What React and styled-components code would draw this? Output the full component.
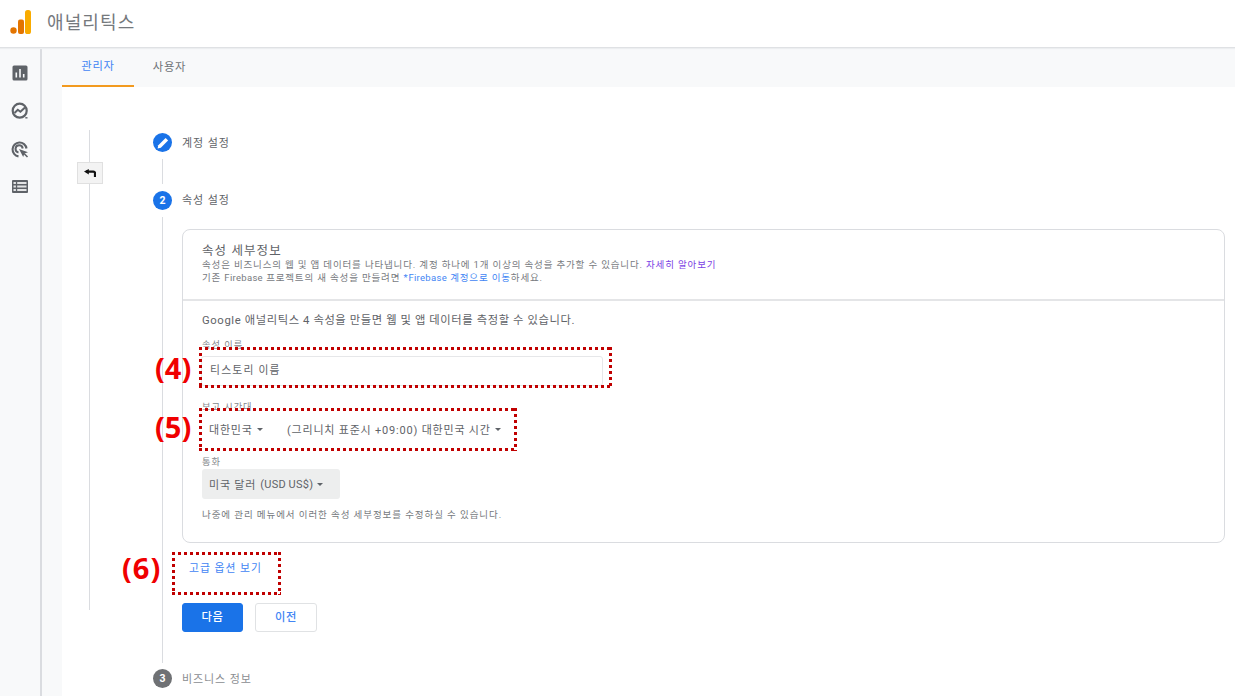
import React from "react";
import styled, { createGlobalStyle } from "styled-components";

const Global = createGlobalStyle`
  html, body { margin: 0; padding: 0; background: #fff; height: 100%; overflow: hidden; }
  body { font-family: Roboto, "Noto Sans CJK KR", sans-serif; color: #5f6368; }
  * { box-sizing: border-box; }
`;

const Page = styled.div`width: 1235px; height: 696px; overflow: hidden; display: flex; flex-direction: column;`;
const Header = styled.header`height: 48px; flex: none; background: #fff; border-bottom: 1px solid #dfe1e4; box-shadow: 0 1px 1px #eceef0; display: flex; align-items: flex-start; padding: 10px 0 0 10px; gap: 16px; position: relative; z-index: 1;`;
const Title = styled.div`font-size: 18px; line-height: 25px; color: #75797d; letter-spacing: 1.1px;`;
const Body = styled.div`flex: 1; display: flex; min-height: 0;`;
const Side = styled.nav`width: 42px; flex: none; background: #f8f9fa; border-right: 2px solid #dadce0; display: flex; flex-direction: column; align-items: center; padding-top: 17px; gap: 21px;`;
const Main = styled.main`flex: 1; background: #f8f9fa; padding-left: 20px; display: flex; flex-direction: column; min-width: 0;`;
const Tabs = styled.div`height: 39px; flex: none; display: flex;`;
const Tab = styled.div`width: ${p => p.$w}px; height: 39px; display: flex; align-items: center; justify-content: center; font-size: 11.3px; letter-spacing: 0.8px; color: ${p => p.$on ? "#4285f4" : "#6f7377"}; border-bottom: ${p => p.$on ? "2px solid #f29a1f" : "none"}; padding-bottom: 3px; padding-right: ${p => p.$pr || 0}px;`;
const Content = styled.div`flex: 1; background: #fff; display: flex; padding-top: 43px; min-height: 0;`;
const Rail = styled.div`width: 91px; flex: none; position: relative; padding-left: 27px;`;
const RailLine = styled.div`width: 1px; height: 480px; background: #dadce0;`;
const Collapse = styled.div`position: absolute; left: 15px; top: 32px; width: 26px; height: 22px; background: #f3f3f3; border: 1px solid #e0e0e0; display: flex; align-items: center; justify-content: center;`;
const Steps = styled.div`flex: 1; display: flex; flex-direction: column; padding-top: 3px; min-width: 0; padding-right: 10px;`;
const StepHead = styled.div`display: flex; align-items: center; gap: 10px; height: 19px;`;
const Circle = styled.div`width: 19px; height: 19px; border-radius: 50%; background: ${p => p.$c}; color: #fff; font-size: 10.5px; font-weight: 700; display: flex; align-items: center; justify-content: center; flex: none;`;
const StepName = styled.div`font-size: 11px; color: ${p => p.$muted ? "#8a8d91" : "#5f6368"}; letter-spacing: 0.9px; margin-top: ${p => p.$mt ?? -1}px;`;
const Connector = styled.div`width: 1px; height: 25px; background: #dadce0; margin: 7px 0 7px 9px;`;
const StepBody = styled.div`margin: 7px 0 6px 9px; border-left: 1px solid #dadce0; padding: 12px 0 0 19px; height: 446px;`;
const Card = styled.section`border: 1px solid #dadce0; border-radius: 8px; height: 314px; display: flex; flex-direction: column;`;
const CardHead = styled.div`height: 71px; border-bottom: 2px solid #e4e5e7; padding: 13px 0 0 19px; flex: none;`;
const CardTitle = styled.div`font-size: 12.5px; line-height: 15px; color: #5f6368; letter-spacing: 1.1px;`;
const Desc = styled.div`font-size: 9.5px; line-height: 13px; color: #777a7e; letter-spacing: 0.84px; white-space: nowrap; &:first-of-type { margin-top: 1px; }`;
const Latin = styled.span`letter-spacing: 0.3px;`;
const Link = styled.span`color: ${p => p.$c || "#4285f4"};`;
const CardBody = styled.div`padding: 12px 0 0 19px; display: flex; flex-direction: column; align-items: flex-start;`;
const Lead = styled.div`font-size: 11.3px; line-height: 15px; color: #5f6368; letter-spacing: 0.6px; white-space: nowrap;`;
const Label = styled.div`font-size: 9.2px; line-height: 11px; color: #85888c; letter-spacing: 1px; margin-top: ${p => p.$mt}px;`;
const Annotated = styled.div`position: relative;`;
const Input = styled.div`width: 402px; height: 30px; margin-top: 6px; margin-left: -1px; border: 1px solid #e6e7e9; border-radius: 3px; padding: 0 0 0 8px; font-size: 10.8px; line-height: 27px; color: #5f6368; letter-spacing: 1.2px;`;
const dots = `linear-gradient(to right, #c00000 58%, transparent 0)`;
const dotsV = `linear-gradient(to bottom, #c00000 58%, transparent 0)`;
const DotBox = styled.div`
  position: absolute; left: ${p => p.$l}px; top: ${p => p.$t}px; width: ${p => p.$w}px; height: ${p => p.$h}px; pointer-events: none;
  background-image: ${dots}, ${dots}, ${dotsV}, ${dotsV};
  background-size: 6px 3px, 6px 3px, 3px 6px, 3px 6px;
  background-position: 0 0, 0 100%, 0 0, 100% 0;
  background-repeat: repeat-x, repeat-x, repeat-y, repeat-y;
`;
const Mark = styled.div`position: absolute; left: ${p => p.$l}px; top: ${p => p.$t}px; font-family: "Open Sans", sans-serif; font-weight: 700; font-size: 29px; line-height: 34px; color: #f00000; white-space: nowrap;`;
const SelectRow = styled.div`display: flex; height: 30px; margin-top: 2px;`;
const Select = styled.div`height: 30px; display: flex; align-items: center; gap: 4px; padding-left: ${p => p.$pl ?? 7}px; font-size: 11px; letter-spacing: 0.8px; color: #5f6368; white-space: nowrap; border-radius: 3px; background: ${p => p.$fill ? "#edeeee" : "transparent"}; width: ${p => p.$w ? p.$w + "px" : "auto"};`;
const SelectText = styled.span`word-spacing: -0.5px;`;
const Caret = styled.i`display: block; width: 0; height: 0; margin-top: 1px; border: 3px solid transparent; border-top: 3px solid #5f6368; border-bottom: none;`;
const Note = styled.div`font-size: 9.5px; line-height: 12px; color: #75797d; letter-spacing: 0.92px; margin-top: 10px; white-space: nowrap;`;
const MoreRow = styled.div`position: relative; margin: 19px 0 0 7px; height: 13px; font-size: 10.8px; line-height: 13px; color: #4285f4; letter-spacing: 1px;`;
const Buttons = styled.div`display: flex; gap: 12px; margin-top: 28px;`;
const Button = styled.div`width: ${p => p.$w}px; height: 29px; border-radius: 3px; display: flex; align-items: center; justify-content: center; font-size: 11.3px; letter-spacing: 0.6px; font-weight: 500; padding-bottom: 3px; background: ${p => p.$primary ? "#1a73e8" : "#fff"}; color: ${p => p.$primary ? "#fff" : "#4285f4"}; border: 1px solid ${p => p.$primary ? "#1a73e8" : "#e0e2e4"};`;

const iconFill = "#5f6368";
const Logo = () => (
  <svg width="21" height="25" viewBox="0 0 21 25" style={{ flex: "none" }}>
    <circle cx="3.5" cy="20.5" r="3.2" fill="#e37400" />
    <rect x="8" y="9.5" width="6" height="14.5" rx="2" fill="#e37400" />
    <rect x="15" y="0" width="6" height="24" rx="2.6" fill="#f9ab00" />
  </svg>
);
const BarsIcon = () => (
  <svg width="16" height="16" viewBox="0 0 16 16">
    <rect width="15" height="15" x="0.5" y="0.5" rx="1.5" fill={iconFill} />
    <path d="M3.5 7.5h1.6v5H3.5zM7.2 4h1.6v8.5H7.2zM10.9 9h1.6v3.5h-1.6z" fill="#f8f9fa" />
  </svg>
);
const TrendIcon = () => (
  <svg width="18" height="18" viewBox="0 0 18 18" fill="none" stroke={iconFill}>
    <circle cx="8.7" cy="8.7" r="7" strokeWidth="2.2" />
    <path d="M3.5 11l3.3-3.2 2.6 2L14 5.5" strokeWidth="2" />
    <path d="M14.3 15.8h2.2" strokeWidth="1.4" />
  </svg>
);
const TargetIcon = () => (
  <svg width="18" height="18" viewBox="0 0 18 18" fill="none" stroke={iconFill}>
    <path d="M7.5 15.4A7 7 0 1 1 15.5 7.5" strokeWidth="2.1" />
    <path d="M7.5 11.5A3.6 3.6 0 1 1 11.7 7.5" strokeWidth="2" />
    <path d="M8 8l9 3.2-3.6 1.3-1.2 3.6z" fill={iconFill} stroke="none" />
    <path d="M13 12.5l3.5 3.5" strokeWidth="1.6" />
  </svg>
);
const TableIcon = () => (
  <svg width="16" height="13" viewBox="0 0 16 13">
    <rect width="16" height="13" rx="1" fill={iconFill} />
    <path d="M1.5 2h2.4v2H1.5zM1.5 5.5h2.4v2H1.5zM1.5 9h2.4v2H1.5zM5.2 2h9.3v2H5.2zM5.2 5.5h9.3v2H5.2zM5.2 9h9.3v2H5.2z" fill="#e4e5e6" />
  </svg>
);
const BackIcon = () => (
  <svg width="12" height="8" viewBox="0 0 12 8" fill="none" stroke="#111">
    <path d="M2 2.6h7.4c1.1 0 1.6.6 1.6 1.6V8" strokeWidth="2.2" />
    <path d="M4.8 0L0 2.6l4.8 2.9z" fill="#111" stroke="none" />
  </svg>
);
const Pencil = () => (
  <svg width="12" height="12" viewBox="0 0 12 12">
    <path d="M8.6.9l2.5 2.5-7.3 7.3-3.2.7.7-3.2z" fill="#fff" />
  </svg>
);

export default function App() {
  return (
    <Page>
      <Global />
      <Header>
        <Logo />
        <Title>애널리틱스</Title>
      </Header>
      <Body>
        <Side>
          <BarsIcon />
          <TrendIcon />
          <TargetIcon />
          <TableIcon />
        </Side>
        <Main>
          <Tabs>
            <Tab $w={72} $on>관리자</Tab>
            <Tab $w={72} $pr={1}>사용자</Tab>
          </Tabs>
          <Content>
            <Rail>
              <RailLine />
              <Collapse><BackIcon /></Collapse>
            </Rail>
            <Steps>
              <StepHead>
                <Circle $c="#1a73e8"><Pencil /></Circle>
                <StepName>계정 설정</StepName>
              </StepHead>
              <Connector />
              <StepHead>
                <Circle $c="#1a73e8">2</Circle>
                <StepName $mt={-3}>속성 설정</StepName>
              </StepHead>
              <StepBody>
                <Card>
                  <CardHead>
                    <CardTitle>속성 세부정보</CardTitle>
                    <Desc>속성은 비즈니스의 웹 및 앱 데이터를 나타냅니다. 계정 하나에 1개 이상의 속성을 추가할 수 있습니다. <Link $c="#7b3fe4">자세히 알아보기</Link></Desc>
                    <Desc>기존 <Latin>Firebase</Latin> 프로젝트의 새 속성을 만들려면 <Link>*<Latin>Firebase</Latin> 계정으로 이동</Link>하세요.</Desc>
                  </CardHead>
                  <CardBody>
                    <Lead>Google 애널리틱스 4 속성을 만들면 웹 및 앱 데이터를 측정할 수 있습니다.</Lead>
                    <Label $mt={11}>속성 이름</Label>
                    <Annotated>
                      <Input>티스토리 이름</Input>
                      <DotBox $l={-3} $t={-3} $w={413} $h={41} />
                      <Mark $l={-47} $t={1}>(4)</Mark>
                    </Annotated>
                    <Label $mt={15}>보고 시간대</Label>
                    <Annotated>
                      <SelectRow>
                        <Select $w={85}>대한민국 <Caret /></Select>
                        <Select $pl={0}>(그리니치 표준시 +09:00) 대한민국 시간 <Caret /></Select>
                      </SelectRow>
                      <DotBox $l={-3} $t={-4} $w={318} $h={43} />
                      <Mark $l={-47} $t={-2}>(5)</Mark>
                    </Annotated>
                    <Label $mt={12}>통화</Label>
                    <SelectRow>
                      <Select $fill $w={138}>미국 달러 <SelectText><Latin>(USD US$)</Latin></SelectText> <Caret /></Select>
                    </SelectRow>
                    <Note>나중에 관리 메뉴에서 이러한 속성 세부정보를 수정하실 수 있습니다.</Note>
                  </CardBody>
                </Card>
                <MoreRow>
                  고급 옵션 보기
                  <DotBox $l={-17} $t={-10} $w={109} $h={43} />
                  <Mark $l={-67} $t={-11}>(6)</Mark>
                </MoreRow>
                <Buttons>
                  <Button $primary $w={61}>다음</Button>
                  <Button $w={62}>이전</Button>
                </Buttons>
              </StepBody>
              <StepHead>
                <Circle $c="#6f7174">3</Circle>
                <StepName $muted>비즈니스 정보</StepName>
              </StepHead>
            </Steps>
          </Content>
        </Main>
      </Body>
    </Page>
  );
}
